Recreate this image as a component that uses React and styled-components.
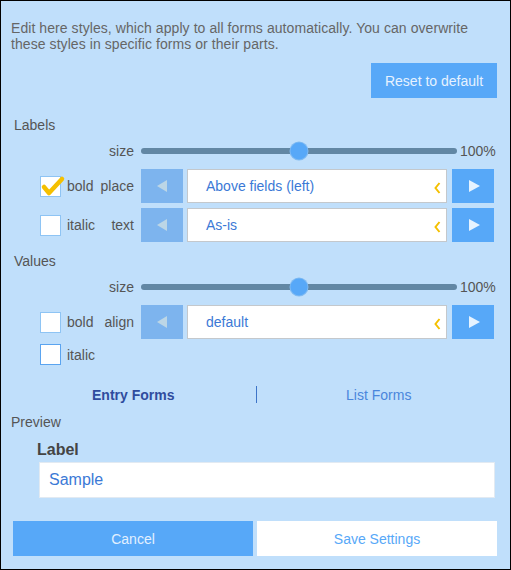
import React, { useState } from "react";
import styled, { createGlobalStyle } from "styled-components";

const GlobalStyle = createGlobalStyle`
  body {
    margin: 0;
    font-family: "Liberation Sans", Arial, sans-serif;
    font-size: 14px;
  }
`;

export default function App() {
  const [labelBold, setLabelBold] = useState(true);
  const [labelItalic, setLabelItalic] = useState(false);
  const [valueBold, setValueBold] = useState(false);
  const [valueItalic, setValueItalic] = useState(false);
  const [tab, setTab] = useState("entry");

  return (
    <>
      <GlobalStyle />
      <Panel>
        <Intro>
          Edit here styles, which apply to all forms automatically. You can overwrite
          these styles in specific forms or their parts.
        </Intro>
        <ResetRow>
          <PrimaryButton>Reset to default</PrimaryButton>
        </ResetRow>

        <SectionTitle>Labels</SectionTitle>
        <SizeRow>
          <span />
          <FieldLabel>size</FieldLabel>
          <Slider value={50} />
        </SizeRow>
        <ControlRow>
          <Check checked={labelBold} onClick={() => setLabelBold(!labelBold)} text="bold" />
          <FieldLabel>place</FieldLabel>
          <Picker value="Above fields (left)" />
        </ControlRow>
        <ControlRow $gap={5}>
          <Check checked={labelItalic} onClick={() => setLabelItalic(!labelItalic)} text="italic" />
          <FieldLabel>text</FieldLabel>
          <Picker value="As-is" />
        </ControlRow>

        <SectionTitle $top={11}>Values</SectionTitle>
        <SizeRow>
          <span />
          <FieldLabel>size</FieldLabel>
          <Slider value={50} />
        </SizeRow>
        <ControlRow>
          <Check checked={valueBold} onClick={() => setValueBold(!valueBold)} text="bold" />
          <FieldLabel>align</FieldLabel>
          <Picker value="default" />
        </ControlRow>
        <CheckOnlyRow>
          <Check checked={valueItalic} focused onClick={() => setValueItalic(!valueItalic)} text="italic" />
        </CheckOnlyRow>

        <Tabs>
          <Tab $active={tab === "entry"} onClick={() => setTab("entry")}>Entry Forms</Tab>
          <TabDivider />
          <Tab $active={tab === "list"} onClick={() => setTab("list")}>List Forms</Tab>
        </Tabs>

        <PreviewTitle>Preview</PreviewTitle>
        <PreviewLabel>Label</PreviewLabel>
        <PreviewInput>Sample</PreviewInput>

        <Footer>
          <FooterButton>Cancel</FooterButton>
          <FooterButton $light>Save Settings</FooterButton>
        </Footer>
      </Panel>
    </>
  );
}

function Check({ checked, focused, onClick, text }) {
  return (
    <CheckGroup onClick={onClick}>
      <Box $focused={focused}>
        {checked && (
          <CheckMark width="26" height="22" viewBox="0 0 26 22">
            <polyline points="4,11 9,17 22,3" />
          </CheckMark>
        )}
      </Box>
      <CheckText>{text}</CheckText>
    </CheckGroup>
  );
}

function Slider({ value }) {
  return (
    <SliderWrap>
      <Track>
        <Thumb style={{ left: `${value}%` }} />
      </Track>
      <Percent>100%</Percent>
    </SliderWrap>
  );
}

function Picker({ value }) {
  return (
    <PickerWrap>
      <ArrowButton $disabled>
        <Triangle $dir="left" $disabled />
      </ArrowButton>
      <SelectBox>
        <span>{value}</span>
        <Chevron width="7" height="12" viewBox="0 0 7 12">
          <polyline points="5.5,1 1.5,6 5.5,11" />
        </Chevron>
      </SelectBox>
      <ArrowButton>
        <Triangle $dir="right" />
      </ArrowButton>
    </PickerWrap>
  );
}

const Panel = styled.div`
  width: 511px;
  height: 570px;
  box-sizing: border-box;
  border: 1px solid #000;
  background: #c0dffb;
  padding: 19px 13px 0 10px;
  display: flex;
  flex-direction: column;
  color: #555;
  line-height: 16px;
`;

const Intro = styled.p`
  margin: 0;
  color: #666;
  font-size: 14px;
  line-height: 16px;
  letter-spacing: 0.07px;
`;

const ResetRow = styled.div`
  display: flex;
  justify-content: flex-end;
  margin-top: 11px;
`;

const PrimaryButton = styled.button`
  width: 126px;
  height: 35px;
  border: none;
  background: #57a8f8;
  color: #e6f2ff;
  font-family: inherit;
  font-size: 14px;
  cursor: pointer;
`;

const SectionTitle = styled.div`
  margin-top: ${(p) => p.$top ?? 19}px;
  margin-left: 3px;
  color: #555;
`;

const ControlRow = styled.div`
  display: grid;
  grid-template-columns: 60px 41px 353px;
  align-items: center;
  height: 34px;
  margin-top: ${(p) => p.$gap ?? 9}px;
  padding-left: 29px;
`;

const SizeRow = styled(ControlRow)`
  height: 18px;
  margin-top: 9px;
`;

const CheckOnlyRow = styled(ControlRow)`
  height: 21px;
  margin-top: 5px;
`;

const FieldLabel = styled.span`
  text-align: right;
  padding-right: 7px;
  color: #555;
`;

const CheckGroup = styled.label`
  display: flex;
  align-items: center;
  gap: 6px;
  cursor: pointer;
`;

const Box = styled.span`
  position: relative;
  width: 21px;
  height: 21px;
  box-sizing: border-box;
  background: #fff;
  border: 1px solid ${(p) => (p.$focused ? "#5aa4f0" : "#8ec4f4")};
`;

const CheckMark = styled.svg`
  position: absolute;
  left: -1px;
  top: -1px;
  overflow: visible;

  polyline {
    fill: none;
    stroke: #f5c000;
    stroke-width: 4.5;
    stroke-linecap: round;
    stroke-linejoin: round;
  }
`;

const CheckText = styled.span`
  color: #555;
`;

const SliderWrap = styled.div`
  display: flex;
  align-items: center;
`;

const Track = styled.div`
  position: relative;
  flex: none;
  width: 316px;
  height: 6px;
  border-radius: 3px;
  background: #6287a4;
`;

const Thumb = styled.span`
  position: absolute;
  top: 50%;
  width: 17px;
  height: 17px;
  border-radius: 50%;
  background: #57a8f8;
  box-shadow: 0 0 0 1px #7fbaf2;
  transform: translate(-50%, -50%);
`;

const Percent = styled.span`
  flex: none;
  margin-left: 3px;
  color: #555;
`;

const PickerWrap = styled.div`
  display: flex;
  height: 34px;
  gap: 4px;
`;

const ArrowButton = styled.button`
  width: 42px;
  height: 34px;
  flex: none;
  border: none;
  padding: 0;
  display: flex;
  align-items: center;
  justify-content: center;
  background: ${(p) => (p.$disabled ? "#7db4ee" : "#57a8f8")};
  cursor: ${(p) => (p.$disabled ? "default" : "pointer")};

  &:last-child {
    margin-left: 1px;
  }
`;

const Triangle = styled.span`
  width: 0;
  height: 0;
  border-top: 6px solid transparent;
  border-bottom: 6px solid transparent;
  ${(p) =>
    p.$dir === "left"
      ? `border-right: 10px solid ${p.$disabled ? "#bcd6e6" : "#e6f3ff"};`
      : `border-left: 11px solid #e6f3ff; margin-left: 2px;`}
`;

const SelectBox = styled.div`
  width: 260px;
  box-sizing: border-box;
  background: #fff;
  border: 1px solid #c4c8cc;
  display: flex;
  align-items: center;
  justify-content: space-between;
  padding: 0 5px 0 18px;
  color: #3b79d6;
`;

const Chevron = styled.svg`
  margin-top: 4px;

  polyline {
    fill: none;
    stroke: #f5c000;
    stroke-width: 2;
  }
`;

const Tabs = styled.div`
  display: flex;
  align-items: center;
  height: 17px;
  margin-top: 21px;
  width: 490px;
`;

const Tab = styled.div`
  flex: 1;
  text-align: center;
  font-weight: ${(p) => (p.$active ? "bold" : "normal")};
  color: ${(p) => (p.$active ? "#2f4c9e" : "#4a86dc")};
  cursor: pointer;
`;

const TabDivider = styled.span`
  width: 1px;
  height: 17px;
  background: #3d74c8;
`;

const PreviewTitle = styled.div`
  margin-top: 11px;
  margin-left: 0;
  color: #555;
`;

const PreviewLabel = styled.div`
  margin-top: 11px;
  margin-left: 26px;
  font-size: 16px;
  line-height: 18px;
  font-weight: bold;
  color: #444;
`;

const PreviewInput = styled.div`
  margin-top: 3px;
  margin-left: 28px;
  width: 456px;
  height: 36px;
  box-sizing: border-box;
  background: #fff;
  border: 1px solid #e2eaf2;
  padding-left: 9px;
  display: flex;
  align-items: center;
  font-size: 16px;
  line-height: 18px;
  color: #3b79d6;
`;

const Footer = styled.div`
  display: flex;
  gap: 4px;
  margin-top: 23px;
  margin-left: 2px;
`;

const FooterButton = styled.button`
  width: 240px;
  height: 35px;
  border: none;
  font-family: inherit;
  font-size: 14px;
  background: ${(p) => (p.$light ? "#fff" : "#57a8f8")};
  color: ${(p) => (p.$light ? "#57a8f8" : "#e3f0ff")};
  cursor: pointer;
`;
